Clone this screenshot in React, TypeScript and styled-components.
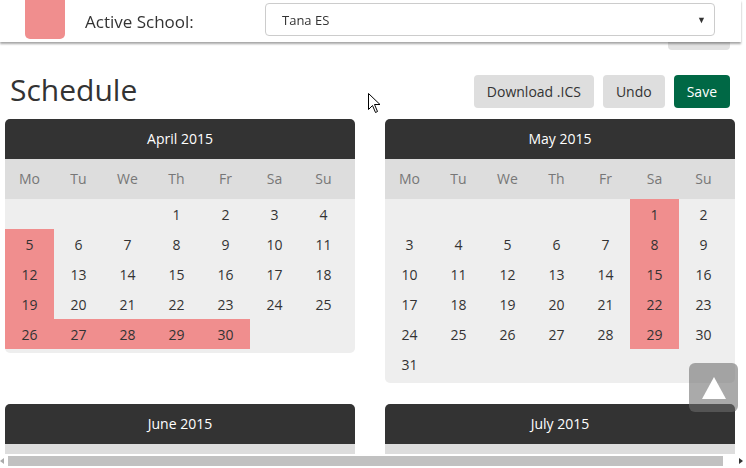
import React from "react";
import styled, { createGlobalStyle } from "styled-components";

const Global = createGlobalStyle`
  html, body { margin: 0; padding: 0; background: #fff; overflow: hidden; }
  body { font-family: "Open Sans", "Noto Sans", sans-serif; color: #333; }
  * { box-sizing: border-box; }
`;

const PINK = "#f08e8e";

const Header = styled.header`
  position: fixed;
  top: 0;
  left: 0;
  width: 741px;
  height: 42px;
  background: #fff;
  display: flex;
  align-items: center;
  z-index: 10;
  box-shadow: 0 2px 2px rgba(0, 0, 0, 0.35);
`;

const Swatch = styled.div`
  width: 40px;
  height: 39px;
  align-self: flex-start;
  margin-left: 25px;
  background: ${PINK};
  border-radius: 0 0 5px 5px;
`;

const Label = styled.span`
  margin-left: 20px;
  font-size: 17px;
  color: #333;
  width: 180px;
  margin-top: 1px;
`;

const Select = styled.div`
  width: 450px;
  height: 33px;
  margin-top: -3px;
  border: 1px solid #ccc;
  border-radius: 4px;
  display: flex;
  align-items: center;
  justify-content: space-between;
  padding: 0 8px 0 16px;
  font-size: 13px;
  color: #333;
`;

const Arrow = styled.span`
  font-size: 9px;
  color: #333;
`;

const HiddenBtn = styled.div`
  position: absolute;
  top: 30px;
  left: 668px;
  width: 62px;
  height: 20px;
  background: #e2e2e2;
  border-radius: 4px;
  z-index: 5;
`;

const Page = styled.main`
  padding-top: 75px;
`;

const TitleRow = styled.div`
  display: flex;
  justify-content: space-between;
  align-items: flex-start;
  padding: 0 16px 0 10px;
  height: 44px;
`;

const Title = styled.h1`
  margin: -3px 0 0;
  font-size: 30px;
  font-weight: 400;
  line-height: 36px;
  color: #333;
`;

const Buttons = styled.div`
  display: flex;
  gap: 9px;
`;

const Btn = styled.button<{ $primary?: boolean }>`
  height: 33px;
  padding: 0 13px;
  border: none;
  border-radius: 4px;
  font-family: "Open Sans", sans-serif;
  font-size: 14px;
  background: ${(p) => (p.$primary ? "#006845" : "#dedede")};
  color: ${(p) => (p.$primary ? "#fff" : "#333")};
`;

const Grid = styled.div`
  display: grid;
  grid-template-columns: 350px 350px;
  column-gap: 30px;
  row-gap: 21px;
  padding-left: 5px;
  align-items: start;
`;

const Card = styled.section`
  background: #eee;
  border-radius: 5px;
  overflow: hidden;
  padding-bottom: 4px;
`;

const CardHead = styled.div`
  height: 40px;
  line-height: 40px;
  background: #333;
  color: #fff;
  text-align: center;
  font-size: 14px;
  font-weight: 400;
`;

const WeekRow = styled.div`
  display: grid;
  grid-template-columns: repeat(7, 49px);
  height: 40px;
  background: #ddd;
  align-items: center;
`;

const WeekDay = styled.span`
  text-align: center;
  font-size: 14px;
  color: #777;
  margin-top: -1px;
`;

const Days = styled.div`
  display: grid;
  grid-template-columns: repeat(7, 49px);
  grid-auto-rows: 30px;
`;

const Day = styled.span<{ $on?: boolean }>`
  display: flex;
  align-items: center;
  justify-content: center;
  font-size: 14px;
  color: #333;
  background: ${(p) => (p.$on ? PINK : "transparent")};
`;

const ToTop = styled.div`
  position: fixed;
  left: 689px;
  top: 363px;
  width: 49px;
  height: 49px;
  border-radius: 6px;
  background: rgba(109, 109, 109, 0.58);
  display: flex;
  align-items: center;
  justify-content: center;
  z-index: 20;
`;

const ScrollBar = styled.div`
  position: fixed;
  left: 0;
  bottom: 0;
  width: 746px;
  height: 14px;
  background: #fff;
  z-index: 30;
`;

const Thumb = styled.div`
  position: absolute;
  left: 8px;
  top: 2px;
  width: 715px;
  height: 10px;
  background: #c1c1c1;
`;

const Cursor = styled.svg`
  position: fixed;
  left: 368px;
  top: 93px;
  z-index: 40;
`;

const weekdays = ["Mo", "Tu", "We", "Th", "Fr", "Sa", "Su"];

type Month = {
  name: string;
  offset: number;
  days: number;
  pink: (d: number, col: number) => boolean;
};

const months: Month[] = [
  { name: "April 2015", offset: 3, days: 30, pink: (d, c) => c === 0 || d >= 26 },
  { name: "May 2015", offset: 5, days: 31, pink: (_d, c) => c === 5 },
  { name: "June 2015", offset: 0, days: 30, pink: () => false },
  { name: "July 2015", offset: 2, days: 31, pink: () => false },
];

function Calendar({ m }: { m: Month }) {
  const cells: React.ReactNode[] = [];
  for (let i = 0; i < m.offset; i++) cells.push(<Day key={"e" + i} />);
  for (let d = 1; d <= m.days; d++) {
    const col = (m.offset + d - 1) % 7;
    cells.push(
      <Day key={d} $on={m.pink(d, col)}>
        {d}
      </Day>
    );
  }
  return (
    <Card>
      <CardHead>{m.name}</CardHead>
      <WeekRow>
        {weekdays.map((w) => (
          <WeekDay key={w}>{w}</WeekDay>
        ))}
      </WeekRow>
      <Days>{cells}</Days>
    </Card>
  );
}

export default function App() {
  return (
    <>
      <Global />
      <Header>
        <Swatch />
        <Label>Active School:</Label>
        <Select>
          <span>Tana ES</span>
          <Arrow>▼</Arrow>
        </Select>
      </Header>
      <HiddenBtn />
      <Page>
        <TitleRow>
          <Title>Schedule</Title>
          <Buttons>
            <Btn>Download .ICS</Btn>
            <Btn>Undo</Btn>
            <Btn $primary>Save</Btn>
          </Buttons>
        </TitleRow>
        <Grid>
          {months.map((m) => (
            <Calendar key={m.name} m={m} />
          ))}
        </Grid>
      </Page>
      <ToTop>
        <svg width="24" height="22" viewBox="0 0 24 22">
          <polygon points="12,0 24,22 0,22" fill="#fff" />
        </svg>
      </ToTop>
      <Cursor width="13" height="21" viewBox="0 0 13 21">
        <path
          d="M0.5 0.5 L0.5 16.5 L4.5 12.5 L7.5 19.5 L9.5 18.5 L6.5 11.5 L12 11.5 Z"
          fill="#fff"
          stroke="#000"
          strokeWidth="1"
        />
      </Cursor>
      <ScrollBar>
        <svg width="4" height="6" viewBox="0 0 4 6" style={{ position: "absolute", left: 0, top: 4 }}>
          <polygon points="4,0 4,6 0,3" fill="#aaa" />
        </svg>
        <Thumb />
        <svg width="4" height="6" viewBox="0 0 4 6" style={{ position: "absolute", left: 739, top: 4 }}>
          <polygon points="0,0 4,3 0,6" fill="#333" />
        </svg>
      </ScrollBar>
    </>
  );
}
